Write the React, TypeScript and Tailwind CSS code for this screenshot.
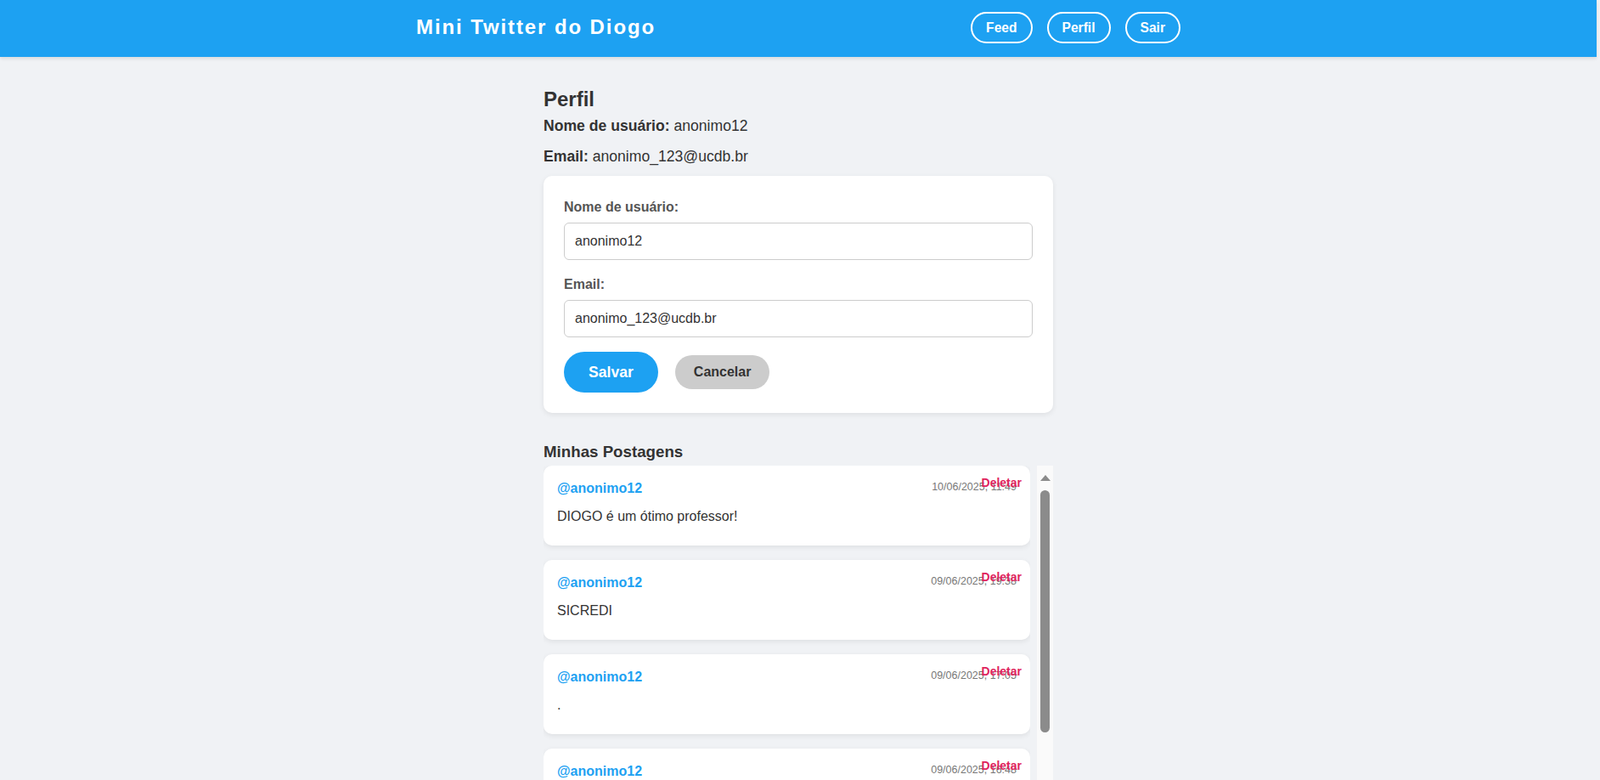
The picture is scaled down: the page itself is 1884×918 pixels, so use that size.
import { useState } from "react";

interface Post {
  id: number;
  date: string;
  text: string;
}

const initialPosts: Post[] = [
  { id: 1, date: "10/06/2025, 11:49", text: "DIOGO é um ótimo professor!" },
  { id: 2, date: "09/06/2025, 19:38", text: "SICREDI" },
  { id: 3, date: "09/06/2025, 17:05", text: "." },
  { id: 4, date: "09/06/2025, 16:48", text: "Bom dia, pessoal!" },
  { id: 5, date: "09/06/2025, 16:30", text: "Primeira postagem" },
];

function Header() {
  return (
    <header className="h-[67px] bg-[#1da1f2] shadow-[0_2px_4px_rgba(0,0,0,0.1)] pb-[3px] flex items-center">
      <div className="w-full max-w-[900px] mx-auto flex items-center justify-between">
        <h1 className="text-[24px] leading-[28px] font-bold tracking-[1.9px] text-white">Mini Twitter do Diogo</h1>
        <nav className="flex items-center gap-[17px]">
          {["Feed", "Perfil", "Sair"].map((label) => (
            <button
              key={label}
              className="border-2 border-white rounded-full px-4 py-[7px] text-[15.6px] leading-[19px] font-bold text-white"
            >
              {label}
            </button>
          ))}
        </nav>
      </div>
    </header>
  );
}

function PostCard({ post, onDelete }: { post: Post; onDelete: (id: number) => void }) {
  return (
    <div className="relative bg-white rounded-[10px] shadow-[0_2px_6px_rgba(0,0,0,0.08)] px-4 pt-[18px] pb-[25px] mb-[17px]">
      <div className="flex justify-between">
        <span className="text-[16px] leading-[18px] font-bold text-[#1da1f2]">@anonimo12</span>
        <span className="text-[12.5px] leading-[15px] text-[#777]">{post.date}</span>
      </div>
      <p className="mt-[15px] text-[16px] leading-[18px] text-[#333]">{post.text}</p>
      <button
        onClick={() => onDelete(post.id)}
        className="absolute top-[12px] right-[10px] text-[14px] leading-[16px] font-bold text-[#e0245e]"
      >
        Deletar
      </button>
    </div>
  );
}

// Classic scrollbar look for the posts list
function ScrollRail() {
  return (
    <div className="w-[19px] shrink-0 bg-[#fafafa] flex flex-col items-center">
      <svg width="12" height="7" viewBox="0 0 12 7" className="mt-[11px]">
        <polygon points="6,0 12,7 0,7" fill="#8b8b8b" />
      </svg>
      <div className="mt-[11px] w-[11px] h-[285px] rounded-full bg-[#8b8b8b]" />
    </div>
  );
}

export default function App() {
  const [username, setUsername] = useState("anonimo12");
  const [email, setEmail] = useState("anonimo_123@ucdb.br");
  const [posts, setPosts] = useState(initialPosts);

  return (
    <div className="h-screen overflow-hidden bg-[#f0f2f5] pr-1 font-['Liberation_Sans',Arial,sans-serif] text-[#333]">
      <Header />

      <main className="max-w-[600px] mx-auto mt-[36px]">
        {/* Profile info */}
        <h2 className="text-[24px] leading-[28px] font-bold text-[#333] mb-[7px]">Perfil</h2>
        <p className="text-[17.6px] leading-[20px] mb-4">
          <strong>Nome de usuário:</strong> anonimo12
        </p>
        <p className="text-[17.6px] leading-[20px] mb-[13px]">
          <strong>Email:</strong> anonimo_123@ucdb.br
        </p>

        {/* Edit form */}
        <div className="bg-white rounded-[10px] shadow-[0_2px_6px_rgba(0,0,0,0.08)] px-6 pt-[28px] pb-6">
          <label className="block text-[16px] leading-[18px] font-bold text-[#555] mb-[9px]">Nome de usuário:</label>
          <input
            value={username}
            onChange={(e) => setUsername(e.target.value)}
            className="block w-full h-[44px] border border-[#ccc] rounded-[6px] px-3 text-[16px] text-[#333] outline-none mb-[20px]"
          />
          <label className="block text-[16px] leading-[18px] font-bold text-[#555] mb-[9px]">Email:</label>
          <input
            value={email}
            onChange={(e) => setEmail(e.target.value)}
            className="block w-full h-[44px] border border-[#ccc] rounded-[6px] px-3 text-[16px] text-[#333] outline-none"
          />
          <div className="flex items-center gap-5 mt-[17px]">
            <button className="h-[48px] px-[29px] rounded-full bg-[#1da1f2] text-white text-[17.6px] font-bold">
              Salvar
            </button>
            <button className="h-[40px] px-[22px] rounded-full bg-[#ccc] text-[#333] text-[16px] font-bold">
              Cancelar
            </button>
          </div>
        </div>

        {/* Posts */}
        <h3 className="mt-[35px] mb-[5px] text-[18.72px] leading-[22px] font-bold text-[#333]">Minhas Postagens</h3>
        <div className="flex gap-2 h-[427px]">
          <div className="flex-1 overflow-hidden">
            {posts.map((post) => (
              <PostCard key={post.id} post={post} onDelete={(id) => setPosts(posts.filter((p) => p.id !== id))} />
            ))}
          </div>
          <ScrollRail />
        </div>
      </main>
    </div>
  );
}
